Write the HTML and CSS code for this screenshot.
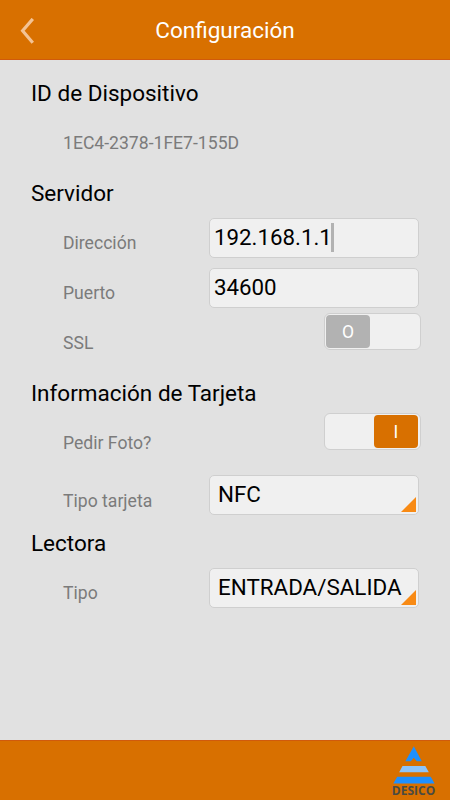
FILE: index.html
```html
<!DOCTYPE html>
<html lang="es">
<head>
    <meta charset="UTF-8">
    <meta name="viewport" content="width=device-width, initial-scale=1.0">
    <title>Configuración</title>
    <link rel="stylesheet" href="styles.css">
</head>
<body>
    <header class="topbar">
        <svg class="back" width="14" height="26" viewBox="0 0 14 26">
            <path d="M12.8 0.9 L2.6 12.8 L12.8 24.8" fill="none" stroke="#f3c394" stroke-width="3.2"/>
        </svg>
        <h1>Configuración</h1>
    </header>

    <main>
        <h2>ID de Dispositivo</h2>
        <div class="row">
            <span class="label">1EC4-2378-1FE7-155D</span>
        </div>

        <h2>Servidor</h2>
        <div class="row">
            <span class="label">Dirección</span>
            <div class="field">192.168.1.1<span class="cursor"></span></div>
        </div>
        <div class="row">
            <span class="label">Puerto</span>
            <div class="field">34600</div>
        </div>
        <div class="row">
            <span class="label">SSL</span>
            <div class="switch"><span class="thumb">O</span></div>
        </div>

        <h2>Información de Tarjeta</h2>
        <div class="row">
            <span class="label">Pedir Foto?</span>
            <div class="switch on"><span class="thumb">I</span></div>
        </div>
        <div class="row lower">
            <span class="label">Tipo tarjeta</span>
            <div class="field select">NFC</div>
        </div>

        <h2>Lectora</h2>
        <div class="row">
            <span class="label">Tipo</span>
            <div class="field select">ENTRADA/SALIDA</div>
        </div>
    </main>

    <footer class="bottombar">
        <div class="logo">
            <svg width="42" height="38" viewBox="0 0 42 38">
                <path d="M20.8 0.2 L28.8 15.2 H23.8 L20.8 11.8 L17.8 15.2 H12.4 Z" fill="#1e90ff"/>
                <path d="M9.5 20 H32.3 L35.8 26.3 H6.2 Z" fill="#8cc4fb"/>
                <path d="M4.2 30.8 H37.7 L41.6 37.5 H0.3 Z" fill="#1e90ff"/>
            </svg>
            <span>DESICO</span>
        </div>
    </footer>
</body>
</html>
```
FILE: styles.css
```css
* {
    box-sizing: border-box;
}

body {
    margin: 0;
    height: 800px;
    display: flex;
    flex-direction: column;
    background: #e1e1e1;
    font-family: Roboto, sans-serif;
    color: #000;
}

.topbar {
    display: grid;
    grid-template-columns: 50px 1fr 50px;
    align-items: center;
    height: 60px;
    background: #d87000;
    border-bottom: 1px solid #d05a0c;
}

.back {
    margin-left: 20px;
    margin-top: 2px;
}

h1 {
    margin: 0;
    text-align: center;
    color: #fff;
    font-size: 22.5px;
    font-weight: 400;
    line-height: 58px;
}

main {
    flex: 1;
    padding: 8px 31px 0;
}

h2 {
    margin: 0;
    height: 50px;
    font-size: 22.5px;
    font-weight: 400;
    line-height: 50px;
}

.row {
    display: flex;
    justify-content: space-between;
    align-items: flex-start;
    height: 50px;
    padding-left: 32px;
}

.lower {
    padding-top: 7px;
}

.lower .label {
    line-height: 52px;
}

.label {
    color: #7b7b7b;
    font-size: 17.6px;
    line-height: 50px;
}

.field {
    display: flex;
    align-items: center;
    width: 210px;
    height: 40px;
    padding: 0 0 2px 4px;
    border: 1px solid #cfcfcf;
    border-radius: 5px;
    background: #f0f0f0;
    font-size: 22.3px;
    line-height: 36px;
}

.cursor {
    width: 3px;
    height: 29px;
    margin-left: -1px;
    background: #b2b2b2;
}

.select {
    position: relative;
    padding-left: 8px;
    font-size: 22.4px;
}

/* corner triangle */
.select::after {
    content: "";
    position: absolute;
    right: 2px;
    bottom: 2px;
    border-left: 15px solid transparent;
    border-bottom: 15px solid #f88a14;
}

.switch {
    display: flex;
    width: 97px;
    height: 37px;
    margin: -5px -2px 0 0;
    padding: 1px 2px 1px 1px;
    border: 1px solid #cfcfcf;
    border-radius: 6px;
    background: #f0f0f0;
}

.thumb {
    width: 44px;
    height: 33px;
    border-radius: 4px;
    background: #b2b2b2;
    color: #fff;
    font-size: 17.5px;
    line-height: 34px;
    text-align: center;
}

.on {
    justify-content: flex-end;
}

.on .thumb {
    background: #d87000;
}

.bottombar {
    display: flex;
    justify-content: flex-end;
    height: 60px;
    padding: 5px 13px 0 0;
    background: #d87000;
    border-top: 1px solid #d05a0c;
}

.logo {
    display: flex;
    flex-direction: column;
    align-items: center;
    width: 46px;
}

.logo span {
    margin-right: 1px;
    color: #4a4a42;
    font-family: "Open Sans", sans-serif;
    font-size: 12px;
    font-weight: 700;
    line-height: 14px;
}
```
